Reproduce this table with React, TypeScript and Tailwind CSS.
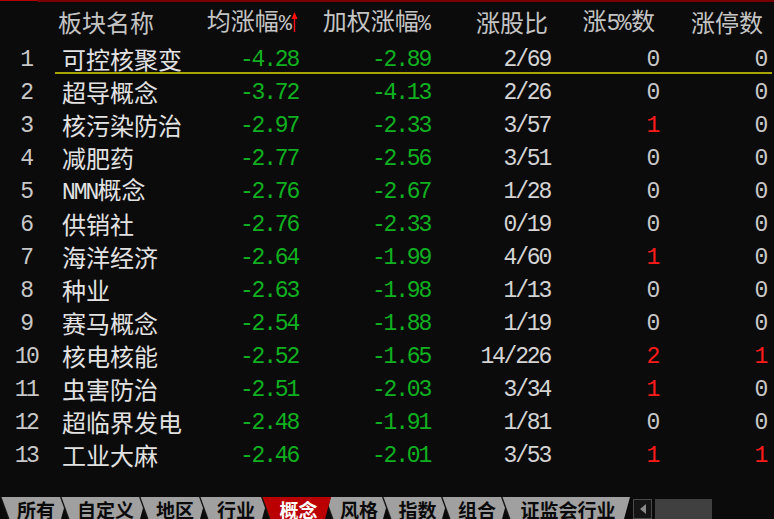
import React from "react";

const CJK = "'Noto Sans CJK SC', 'Noto Sans', sans-serif";
const MONO = "'Liberation Mono', 'DejaVu Sans Mono', monospace";

type Row = {
  n: number;
  name: React.ReactNode;
  avg: string;
  w: string;
  ratio: string;
  f5: number;
  lim: number;
};

const rows: Row[] = [
  { n: 1, name: "可控核聚变", avg: "-4.28", w: "-2.89", ratio: "2/69", f5: 0, lim: 0 },
  { n: 2, name: "超导概念", avg: "-3.72", w: "-4.13", ratio: "2/26", f5: 0, lim: 0 },
  { n: 3, name: "核污染防治", avg: "-2.97", w: "-2.33", ratio: "3/57", f5: 1, lim: 0 },
  { n: 4, name: "减肥药", avg: "-2.77", w: "-2.56", ratio: "3/51", f5: 0, lim: 0 },
  {
    n: 5,
    name: (
      <>
        <span className="font-['Liberation_Mono',monospace] text-[23px] tracking-[-2px]">NMN</span>
        概念
      </>
    ),
    avg: "-2.76",
    w: "-2.67",
    ratio: "1/28",
    f5: 0,
    lim: 0,
  },
  { n: 6, name: "供销社", avg: "-2.76", w: "-2.33", ratio: "0/19", f5: 0, lim: 0 },
  { n: 7, name: "海洋经济", avg: "-2.64", w: "-1.99", ratio: "4/60", f5: 1, lim: 0 },
  { n: 8, name: "种业", avg: "-2.63", w: "-1.98", ratio: "1/13", f5: 0, lim: 0 },
  { n: 9, name: "赛马概念", avg: "-2.54", w: "-1.88", ratio: "1/19", f5: 0, lim: 0 },
  { n: 10, name: "核电核能", avg: "-2.52", w: "-1.65", ratio: "14/226", f5: 2, lim: 1 },
  { n: 11, name: "虫害防治", avg: "-2.51", w: "-2.03", ratio: "3/34", f5: 1, lim: 0 },
  { n: 12, name: "超临界发电", avg: "-2.48", w: "-1.91", ratio: "1/81", f5: 0, lim: 0 },
  { n: 13, name: "工业大麻", avg: "-2.46", w: "-2.01", ratio: "3/53", f5: 1, lim: 1 },
];

const tabs = [
  { label: "所有", w: 67 },
  { label: "自定义", w: 86 },
  { label: "地区", w: 67 },
  { label: "行业", w: 69 },
  { label: "概念", w: 70, active: true },
  { label: "风格", w: 65 },
  { label: "指数", w: 66 },
  { label: "组合", w: 67 },
  { label: "证监会行业", w: 129 },
];

function UpArrow() {
  return (
    <svg width="7" height="22" viewBox="0 0 7 22" className="ml-[2px] self-center">
      <path d="M3.5 1 L6.5 8 L4.2 8 L4.2 21 L2.8 21 L2.8 8 L0.5 8 Z" fill="#ff1010" />
    </svg>
  );
}

function Num({ v, red }: { v: number; red?: boolean }) {
  return <span className={red ? "text-[#ff1a1a]" : "text-[#c8c8c8]"}>{v}</span>;
}

export default function App() {
  return (
    <div className="relative h-[519px] w-[774px] overflow-hidden bg-[#0b0b0b]" style={{ fontFamily: CJK }}>
      {/* top line */}
      <div className="flex h-[2px]">
        <div className="h-[1px] w-[38px] bg-[#b40000]" />
        <div className="h-[2px] flex-1 bg-[#780000]" />
      </div>

      {/* header */}
      <div className="flex h-[40px] items-center text-[24px] leading-none text-[#c4c4c4]">
        <div className="w-[52px]" />
        <div className="w-[150px] pl-[6px]">板块名称</div>
        <div className="flex w-[96px] items-baseline justify-end -mr-[2px]">
          均涨幅<span className="text-[22px] tracking-[-3px]" style={{ fontFamily: MONO }}>%</span>
          <UpArrow />
        </div>
        <div className="flex w-[132px] items-baseline justify-end">
          加权涨幅<span className="-ml-[1px] text-[22px] tracking-[-3px]" style={{ fontFamily: MONO }}>%</span>
        </div>
        <div className="flex w-[120px] justify-end -mr-[1px]">涨股比</div>
        <div className="flex w-[108px] items-baseline justify-end">
          涨<span className="text-[23px] tracking-[-2.5px]" style={{ fontFamily: MONO }}>5%</span>
          <span className="ml-[2px]">数</span>
        </div>
        <div className="flex w-[108px] justify-end">涨停数</div>
      </div>

      {/* rows */}
      <div className="flex flex-col">
        {rows.map((r, i) => (
          <div key={r.n} className="relative flex h-[33px] items-center">
            <div
              className="w-[52px] pt-[4px] text-center text-[23px] tracking-[-2.5px] text-[#c8c8c8]"
              style={{ fontFamily: MONO }}
            >
              {r.n}
            </div>
            <div className="w-[150px] whitespace-nowrap pl-[10px] text-[24px] leading-none text-[#e2e2e2]">
              {r.name}
            </div>
            <div
              className="flex flex-1 items-center pt-[4px] text-[23px] tracking-[-2.2px]"
              style={{ fontFamily: MONO }}
            >
              <div className="w-[96px] text-right text-[#10b020]">{r.avg}</div>
              <div className="w-[132px] text-right text-[#10b020]">{r.w}</div>
              <div className="w-[120px] text-right text-[#d4d4d4]">{r.ratio}</div>
              <div className="w-[108px] text-right">
                <Num v={r.f5} red={r.f5 > 0} />
              </div>
              <div className="w-[108px] text-right">
                <Num v={r.lim} red={r.lim > 0} />
              </div>
            </div>
            {i === 0 && <div className="absolute bottom-[1px] left-[55px] right-[2px] h-[2px] bg-[#a8a400]" />}
          </div>
        ))}
      </div>

      {/* tab bar */}
      <div className="absolute bottom-0 left-0 flex h-[22px] w-full items-stretch">
        <div className="flex h-full">
          {tabs.map((t, i) => (
            <div
              key={t.label}
              className={`relative h-full shrink-0 ${i > 0 ? "-ml-[7px]" : ""} ${t.active ? "z-10" : ""}`}
              style={{ width: t.w }}
            >
              <div className="absolute inset-0 bg-[#161616] [clip-path:polygon(0_0,100%_0,calc(100%_-_6px)_100%,8px_100%)]" />
              <div
                className={`absolute inset-0 [clip-path:polygon(1.5px_0,100%_0,calc(100%_-_6px)_100%,9.5px_100%)] ${
                  t.active ? "bg-[#bb0000]" : "bg-[#a0a0a0]"
                }`}
              />
              <div
                className={`relative flex h-full justify-center pl-[5px] pt-[3px] text-[19px] font-bold leading-none ${
                  t.active ? "text-white" : "text-[#0a0a0a]"
                }`}
              >
                {t.label}
              </div>
            </div>
          ))}
        </div>
        <div className="ml-[3px] mt-[2px] flex h-[20px] w-[19px] items-center justify-center border border-[#4a4a4a] bg-[#151515]">
          <svg width="6" height="10" viewBox="0 0 6 10">
            <path d="M6 0 L0 5 L6 10 Z" fill="#8a8a8a" />
          </svg>
        </div>
        <div className="ml-[3px] mt-[2px] h-[20px] w-[57px] bg-[#404040]" />
      </div>
    </div>
  );
}
